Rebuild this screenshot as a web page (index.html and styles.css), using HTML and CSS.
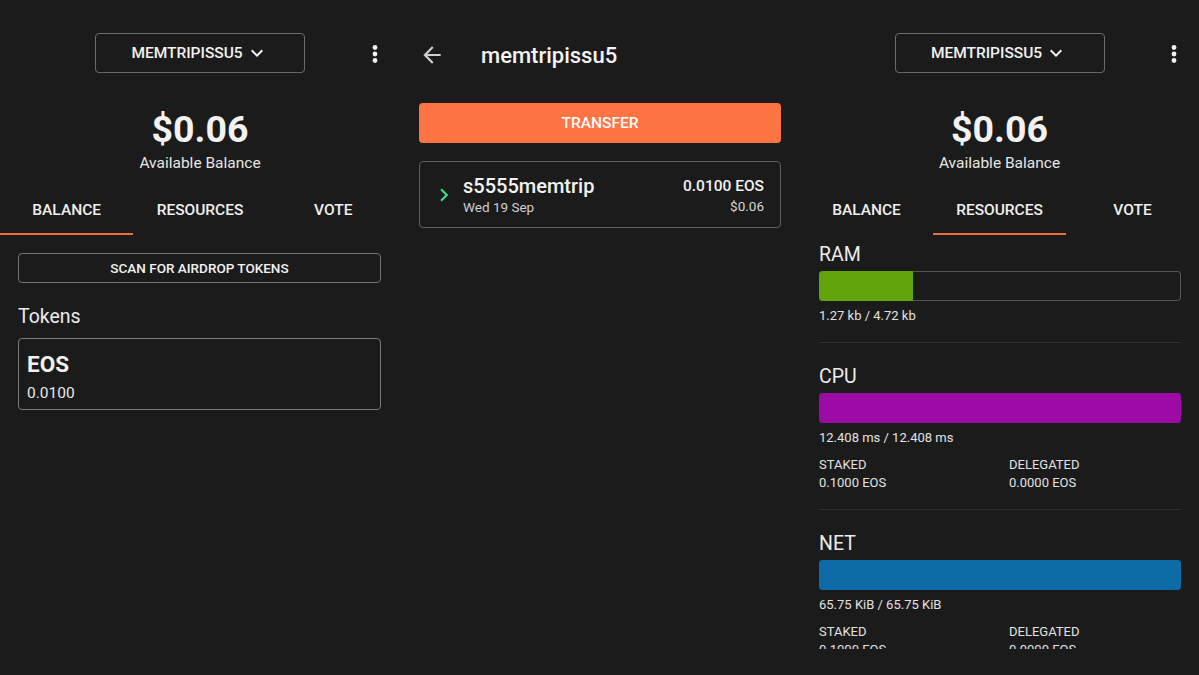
FILE: index.html
```html
<!DOCTYPE html>
<html lang="en">
<head>
<meta charset="utf-8">
<title>EOS Wallet</title>
<link rel="stylesheet" href="styles.css">
</head>
<body>
<div class="screens">

  <section class="panel">
    <header class="wallet-head">
      <span></span>
      <div class="account">
        <span>MEMTRIPISSU5</span>
        <svg class="chev-down" width="24" height="24" viewBox="0 0 24 24"><path d="M16.59 8.59L12 13.17 7.41 8.59 6 10l6 6 6-6z" fill="#f2f2f2"/></svg>
      </div>
      <svg class="kebab" width="26" height="26" viewBox="0 0 26 26"><circle cx="13" cy="6.5" r="2.4" fill="#f2f2f2"/><circle cx="13" cy="13" r="2.4" fill="#f2f2f2"/><circle cx="13" cy="19.5" r="2.4" fill="#f2f2f2"/></svg>
    </header>
    <div class="amount">$0.06</div>
    <div class="amount-label">Available Balance</div>
    <nav class="tabs">
      <div class="tab active">BALANCE</div>
      <div class="tab">RESOURCES</div>
      <div class="tab">VOTE</div>
    </nav>
    <div class="balance-body">
      <div class="scan">SCAN FOR AIRDROP TOKENS</div>
      <div class="section-title">Tokens</div>
      <div class="token-card">
        <div class="token-name">EOS</div>
        <div class="token-amt">0.0100</div>
      </div>
    </div>
  </section>

  <section class="panel detail">
    <header class="detail-head">
      <svg class="back" width="26" height="26" viewBox="0 0 24 24"><path d="M20 11H7.83l5.59-5.59L12 4l-8 8 8 8 1.41-1.41L7.83 13H20v-2z" fill="#cfcfcf"/></svg>
      <h1 class="detail-title">memtripissu5</h1>
    </header>
    <div class="transfer">TRANSFER</div>
    <div class="tx-card">
      <svg class="tx-chev" width="26" height="26" viewBox="0 0 24 24"><path d="M10 6L8.59 7.41 13.17 12l-4.58 4.59L10 18l6-6z" fill="#3ddc84"/></svg>
      <div class="tx-main">
        <div class="tx-name">s5555memtrip</div>
        <div class="tx-date">Wed 19 Sep</div>
      </div>
      <div class="tx-values">
        <div class="tx-amount">0.0100 EOS</div>
        <div class="tx-usd">$0.06</div>
      </div>
    </div>
  </section>

  <section class="panel res">
    <header class="wallet-head">
      <span></span>
      <div class="account">
        <span>MEMTRIPISSU5</span>
        <svg class="chev-down" width="24" height="24" viewBox="0 0 24 24"><path d="M16.59 8.59L12 13.17 7.41 8.59 6 10l6 6 6-6z" fill="#f2f2f2"/></svg>
      </div>
      <svg class="kebab" width="26" height="26" viewBox="0 0 26 26"><circle cx="13" cy="6.5" r="2.4" fill="#f2f2f2"/><circle cx="13" cy="13" r="2.4" fill="#f2f2f2"/><circle cx="13" cy="19.5" r="2.4" fill="#f2f2f2"/></svg>
    </header>
    <div class="amount">$0.06</div>
    <div class="amount-label">Available Balance</div>
    <nav class="tabs">
      <div class="tab">BALANCE</div>
      <div class="tab active">RESOURCES</div>
      <div class="tab">VOTE</div>
    </nav>
    <div class="res-body">
      <div class="res-block">
        <div class="res-label">RAM</div>
        <div class="bar"><div class="fill ram" style="width:26%"></div></div>
        <div class="usage">1.27 kb / 4.72 kb</div>
      </div>
      <div class="res-block">
        <div class="res-label">CPU</div>
        <div class="bar"><div class="fill cpu" style="width:100%"></div></div>
        <div class="usage">12.408 ms / 12.408 ms</div>
        <div class="stats">
          <div>STAKED</div><div>DELEGATED</div>
          <div>0.1000 EOS</div><div>0.0000 EOS</div>
        </div>
      </div>
      <div class="res-block">
        <div class="res-label">NET</div>
        <div class="bar"><div class="fill net" style="width:100%"></div></div>
        <div class="usage">65.75 KiB / 65.75 KiB</div>
        <div class="stats">
          <div>STAKED</div><div>DELEGATED</div>
          <div>0.1000 EOS</div><div>0.0000 EOS</div>
        </div>
      </div>
    </div>
  </section>

</div>
</body>
</html>
```

FILE: styles.css
```css
* { box-sizing: border-box; }

body {
  margin: 0;
  background: #1b1b1b;
  color: #f0f0f0;
  font-family: Roboto, "Noto Sans", "Liberation Sans", sans-serif;
}

.screens {
  display: flex;
  height: 675px;
}

.panel {
  width: 400px;
  flex: none;
}

.panel.res {
  flex: 1 1 auto;
  width: auto;
  height: 649px;
  overflow: hidden;
}

/* header with account selector */
.wallet-head {
  display: grid;
  grid-template-columns: 1fr auto 1fr;
  align-items: center;
  padding-top: 33px;
}

.account {
  width: 210px;
  height: 40px;
  border: 1px solid #6a6a6a;
  border-radius: 4px;
  display: flex;
  align-items: center;
  justify-content: center;
  font-size: 15.5px;
  font-weight: 500;
  color: #f2f2f2;
}

.chev-down {
  margin-left: 2px;
}

.kebab {
  justify-self: end;
  margin-right: 12px;
  margin-top: 1px;
}

.amount {
  margin-top: 35px;
  text-align: center;
  font-size: 37.5px;
  line-height: 42px;
  font-weight: 700;
  color: #f2f2f2;
}

.amount-label {
  margin-top: 3px;
  text-align: center;
  font-size: 15.5px;
  line-height: 20px;
  color: #e6e6e6;
}

.tabs {
  display: flex;
  margin-top: 13px;
}

.tab {
  flex: 1;
  height: 49px;
  border-bottom: 2px solid transparent;
  display: flex;
  align-items: center;
  justify-content: center;
  font-size: 15.5px;
  font-weight: 500;
  color: #f0f0f0;
}

.tab.active {
  border-bottom-color: #f4693a;
}

/* balance tab */
.balance-body {
  padding: 18px 19px 0 18px;
}

.scan {
  height: 30px;
  border: 1px solid #737373;
  border-radius: 4px;
  display: flex;
  align-items: center;
  justify-content: center;
  font-size: 13.5px;
  font-weight: 500;
  color: #f2f2f2;
}

.section-title {
  margin-top: 22px;
  font-size: 19.5px;
  line-height: 24px;
  color: #ececec;
}

.token-card {
  margin-top: 9px;
  height: 72px;
  border: 1px solid #7c7c7c;
  border-radius: 4px;
  padding: 12px 8px 0 8px;
}

.token-name {
  font-size: 22.5px;
  line-height: 26px;
  font-weight: 700;
  color: #f2f2f2;
}

.token-amt {
  margin-top: 6px;
  font-size: 15.5px;
  line-height: 20px;
  color: #e8e8e8;
}

/* middle detail screen */
.detail {
  padding: 0 19px;
}

.detail-head {
  margin-top: 31px;
  height: 48px;
  display: flex;
  align-items: center;
}

.detail-title {
  margin: 0 0 0 36px;
  font-size: 22px;
  font-weight: 500;
  color: #f4f4f4;
}

.transfer {
  margin-top: 24px;
  height: 40px;
  background: #ff7443;
  border-radius: 4px;
  display: flex;
  align-items: center;
  justify-content: center;
  font-size: 15.5px;
  font-weight: 500;
  color: #ffffff;
}

.tx-card {
  margin-top: 18px;
  height: 67px;
  border: 1px solid #5e5e5e;
  border-radius: 4px;
  padding: 0 16px 0 11px;
  display: flex;
  align-items: center;
}

.tx-main {
  margin-left: 6px;
}

.tx-name {
  font-size: 20px;
  line-height: 24px;
  font-weight: 500;
  color: #f2f2f2;
}

.tx-date {
  font-size: 13.5px;
  line-height: 18px;
  color: #cfcfcf;
}

.tx-values {
  margin-left: auto;
  text-align: right;
}

.tx-amount {
  font-size: 15.5px;
  line-height: 22px;
  font-weight: 500;
  color: #f2f2f2;
}

.tx-usd {
  font-size: 13.5px;
  line-height: 18px;
  color: #d6d6d6;
}

/* resources tab */
.res-body {
  padding: 0 18px 0 19px;
}

.res-block {
  padding: 22px 0 17px;
  border-bottom: 1px solid #2f2f2f;
}

.res-block:first-child {
  padding-top: 8px;
}

.res-label {
  font-size: 19.5px;
  line-height: 24px;
  color: #ececec;
}

.bar {
  margin-top: 4px;
  height: 30px;
  border-radius: 4px;
  box-shadow: inset 0 0 0 1px #555555;
  overflow: hidden;
}

.fill {
  height: 100%;
}

.fill.ram { background: #62a40c; }
.fill.cpu { background: #9b0aa5; }
.fill.net { background: #0c6aa6; }

.usage {
  margin-top: 6px;
  font-size: 13px;
  line-height: 18px;
  color: #e2e2e2;
}

.stats {
  margin-top: 9px;
  display: grid;
  grid-template-columns: 190px 1fr;
  font-size: 13px;
  line-height: 18px;
  color: #e2e2e2;
}
```
